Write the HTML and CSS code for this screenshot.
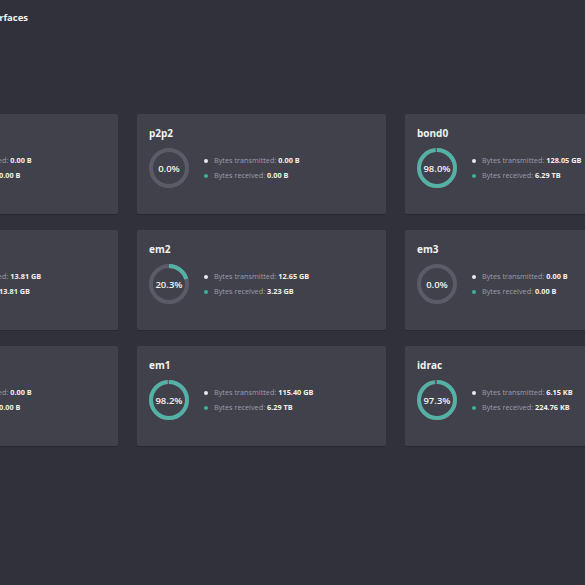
FILE: index.html
```html
<!DOCTYPE html>
<html lang="en">

<head>
  <meta charset="UTF-8" />
  <title>Interfaces</title>
  <link rel="stylesheet" href="styles.css">
</head>

<body>
  <div class="page">
    <h1 class="page-title">Interfaces</h1>

    <div class="grid" id="grid"></div>
  </div>

  <script>
    const interfaces = [
      { name: 'p2p1', pct: 0.0, tx: '0.00 B', rx: '0.00 B' },
      { name: 'p2p2', pct: 0.0, tx: '0.00 B', rx: '0.00 B' },
      { name: 'bond0', pct: 98.0, tx: '128.05 GB', rx: '6.29 TB' },
      { name: 'lo', pct: 50.0, tx: '13.81 GB', rx: '13.81 GB' },
      { name: 'em2', pct: 20.3, tx: '12.65 GB', rx: '3.23 GB' },
      { name: 'em3', pct: 0.0, tx: '0.00 B', rx: '0.00 B' },
      { name: 'em4', pct: 0.0, tx: '0.00 B', rx: '0.00 B' },
      { name: 'em1', pct: 98.2, tx: '115.40 GB', rx: '6.29 TB' },
      { name: 'idrac', pct: 97.3, tx: '6.15 KB', rx: '224.76 KB' }
    ];

    const grid = document.getElementById('grid');
    const circumference = 2 * Math.PI * 18;

    function createCard(item) {
      const card = document.createElement('div');
      card.classList.add('card');

      const dash = (item.pct / 100) * circumference;

      card.innerHTML = `
        <h2 class="card-title">${item.name}</h2>
        <div class="card-body">
          <div class="ring">
            <svg width="40" height="40" viewBox="0 0 40 40">
              <circle class="ring-track" cx="20" cy="20" r="18" />
              <circle class="ring-fill" cx="20" cy="20" r="18"
                stroke-dasharray="${dash} ${circumference}" transform="rotate(-90 20 20)" />
            </svg>
            <span class="ring-label">${item.pct.toFixed(1)}%</span>
          </div>
          <ul class="legend">
            <li><span class="dot dot-tx"></span>Bytes transmitted: <b>${item.tx}</b></li>
            <li><span class="dot dot-rx"></span>Bytes received: <b>${item.rx}</b></li>
          </ul>
        </div>`;

      return card;
    }

    interfaces.forEach(item => grid.appendChild(createCard(item)));
  </script>
</body>

</html>
```

FILE: styles.css
```css
body {
  margin: 0;
  background: #31313c;
  font-family: 'Open Sans', sans-serif;
  color: #f0f0f0;
  overflow: hidden;
  height: 585px;
}

/* page is scrolled a bit to the right */
.page {
  margin-left: -131px;
  padding-top: 11px;
}

.page-title {
  font-size: 9.5px;
  font-weight: 700;
  line-height: 14px;
  margin: 0 0 0 111px;
  color: #f2f2f2;
}

.grid {
  display: grid;
  grid-template-columns: repeat(3, 249px);
  column-gap: 19px;
  row-gap: 16px;
  margin-top: 89px;
}

.card {
  height: 100px;
  box-sizing: border-box;
  padding: 12px;
  background: #41414c;
  border-radius: 2px;
  box-shadow: 0 1px 0 rgba(0, 0, 0, 0.18);
}

.card-title {
  margin: 0;
  font-size: 10px;
  font-weight: 700;
  line-height: 14px;
  color: #f2f2f2;
}

.card-body {
  display: flex;
  align-items: center;
  margin-top: 8px;
}

.ring {
  position: relative;
  width: 40px;
  height: 40px;
}

.ring svg {
  display: block;
}

.ring-track {
  fill: none;
  stroke: #5b5b68;
  stroke-width: 4;
}

.ring-fill {
  fill: none;
  stroke: #55b0a5;
  stroke-width: 4;
}

.ring-label {
  position: absolute;
  inset: 0;
  display: flex;
  align-items: center;
  justify-content: center;
  font-size: 9.5px;
  font-weight: 600;
  color: #f2f2f2;
}

.legend {
  list-style: none;
  margin: 0 0 0 15px;
  padding: 0;
  font-size: 7.3px;
  color: #9d9cab;
}

.legend li {
  display: flex;
  align-items: center;
  line-height: 15px;
  white-space: nowrap;
}

.legend b {
  color: #f2f2f2;
  font-weight: 700;
  margin-left: 2px;
}

.dot {
  width: 4px;
  height: 4px;
  border-radius: 50%;
  margin-right: 6px;
}

.dot-tx {
  background: #e8e8ee;
}

.dot-rx {
  background: #36b39b;
}
```
